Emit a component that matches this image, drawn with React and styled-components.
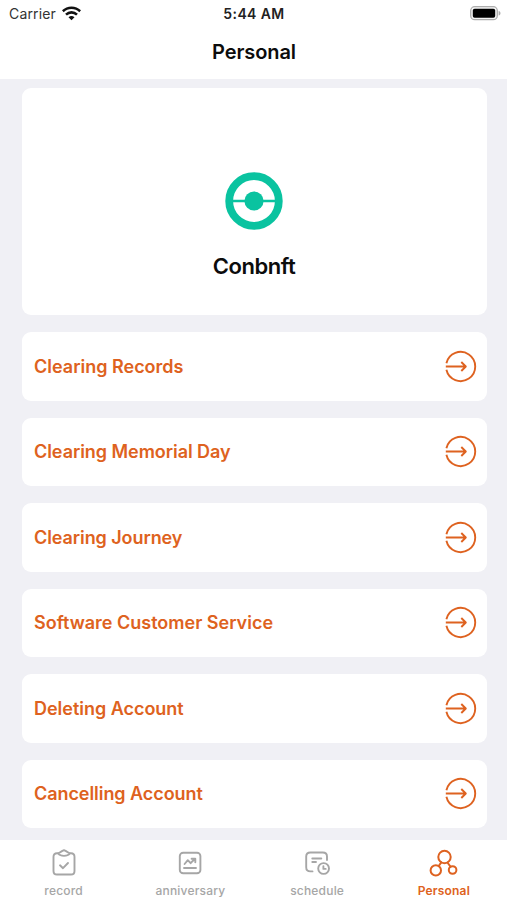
import React from "react";
import styled, { createGlobalStyle } from "styled-components";

const ORANGE = "#de6220";
const GREY = "#a6a6a6";

const GlobalStyle = createGlobalStyle`
  * { box-sizing: border-box; }
  body { margin: 0; background: #f0f0f5; }
`;

const Screen = styled.div`
  width: 507px;
  height: 900px;
  display: flex;
  flex-direction: column;
  overflow: hidden;
  background: #f0f0f5;
  font-family: Inter, "Liberation Sans", sans-serif;
  color: #0c0c0c;
`;

const Header = styled.header`
  height: 79px;
  flex: none;
  background: #fff;
`;

const StatusBar = styled.div`
  height: 27px;
  padding: 0 6px 0 9px;
  display: grid;
  grid-template-columns: 1fr auto 1fr;
  align-items: center;
`;

const Carrier = styled.div`
  display: flex;
  align-items: center;
  gap: 6px;
  font-size: 14px;
  letter-spacing: 0.15px;
  color: #333;
`;

const Clock = styled.div`
  margin-left: -2px;
  font-size: 14px;
  font-weight: 600;
  letter-spacing: 0.4px;
  color: #222;
`;

const BatterySlot = styled.div`
  display: flex;
  justify-content: flex-end;
`;

const Title = styled.h1`
  margin: 0;
  padding-left: 1px;
  height: 50px;
  line-height: 50px;
  text-align: center;
  font-size: 20px;
  font-weight: 600;
  letter-spacing: -0.1px;
`;

const Content = styled.main`
  flex: 1;
  min-height: 0;
  padding: 9px 20.5px 0 21.5px;
  display: flex;
  flex-direction: column;
  gap: 17px;
`;

const ProfileCard = styled.section`
  height: 227px;
  flex: none;
  padding-top: 84px;
  border-radius: 9px;
  background: #fff;
  display: flex;
  flex-direction: column;
  align-items: center;
`;

const ProfileName = styled.div`
  margin-top: 22px;
  line-height: 28px;
  font-size: 22px;
  font-weight: 600;
  letter-spacing: -0.45px;
`;

const Row = styled.button`
  height: 68.5px;
  flex: none;
  padding: 0 10px 0 12.5px;
  border: 0;
  border-radius: 9px;
  background: #fff;
  color: ${ORANGE};
  display: flex;
  align-items: center;
  justify-content: space-between;
  font: inherit;
  font-size: 18px;
  font-weight: 600;
`;

const RowLabel = styled.span`
  letter-spacing: ${(p) => p.$tracking || 0}px;
`;

const TabBar = styled.nav`
  height: 60.5px;
  flex: none;
  background: #fff;
  display: grid;
  grid-template-columns: repeat(4, 1fr);
`;

const Tab = styled.div`
  padding: 8.5px 0 0 0.5px;
  display: flex;
  flex-direction: column;
  align-items: center;
  color: ${(p) => (p.$active ? ORANGE : GREY)};
  font-size: 12px;
  font-weight: ${(p) => (p.$active ? 600 : 500)};
  letter-spacing: 0.2px;
  line-height: 16px;
  gap: 5px;
`;

const Wifi = () => (
  <svg width="19" height="15" viewBox="0 0 19 15" fill="none" stroke="#111" strokeWidth="2.6">
    <path d="M0.8 5.2C5.7.5 13.3.5 18.2 5.2" />
    <path d="M4 8.6C7.2 5.6 11.8 5.6 15 8.6" />
    <path d="M6.5 11.3Q9.5 8.8 12.5 11.3L9.5 14.3Z" fill="#111" stroke="none" />
  </svg>
);

const Battery = () => (
  <svg width="31" height="15" viewBox="0 0 31 15">
    <rect x="0.7" y="0.7" width="26.6" height="13" rx="4" fill="#f5f5f5" stroke="#adadad" strokeWidth="1.3" />
    <rect x="2.8" y="2.8" width="22.4" height="8.9" rx="1.8" fill="#000" />
    <path d="M28.6 5c2.5.5 2.5 4 0 4.5Z" fill="#adadad" />
  </svg>
);

const Logo = () => (
  <svg width="58" height="58" viewBox="0 0 58 58" fill="none" stroke="#0ac3a0">
    <circle cx="29" cy="29" r="24.8" strokeWidth="7.8" />
    <path d="M7 29H51" strokeWidth="2.4" />
    <circle cx="29" cy="29" r="9.6" fill="#0ac3a0" stroke="none" />
  </svg>
);

const EnterIcon = () => (
  <svg width="33" height="33" viewBox="0 0 33 33" fill="none" stroke="currentColor" strokeWidth="1.9" strokeLinejoin="round">
    <path d="M2.4 13.2A14.6 14.6 0 1 1 2.4 19.8" />
    <path d="M1.8 16.5H21.2M17.3 12L21.8 16.5L17.3 21" />
  </svg>
);

const tabIcon = { width: 30, height: 30, viewBox: "0 0 30 30", fill: "none", stroke: "currentColor", strokeWidth: 1.9, strokeLinecap: "round", strokeLinejoin: "round" };

const RecordIcon = () => (
  <svg {...tabIcon}>
    <path d="M9.3 5.2H8C5.6 5.2 4.5 6.5 4.5 8.8V22.9C4.5 25.2 5.6 26.5 8 26.5H22C24.4 26.5 25.5 25.2 25.5 22.9V8.8C25.5 6.5 24.4 5.2 22 5.2H20.7" />
    <path d="M9.2 5.5L13.4 2.9Q15 1.7 16.6 2.9L20.8 5.5Q19 7.9 15 7.9Q11 7.9 9.2 5.5Z" />
    <path d="M11 17.3L14 20.2L19 15" />
  </svg>
);

const AnniversaryIcon = () => (
  <svg {...tabIcon}>
    <rect x="4.8" y="4.7" width="20.6" height="20.6" rx="3.4" />
    <path d="M9.6 16L12.8 12.2L15.6 15.2L19.7 11M16.6 10.7H20.3V14.2M9 20H21" />
  </svg>
);

const ScheduleIcon = () => (
  <svg {...tabIcon}>
    <path d="M25 12V8.6C25 6 23.4 4.5 20.8 4.5H8.4C5.8 4.5 4.2 6 4.2 8.6V19.2C4.2 21.8 5.8 23.4 8.4 23.4H10.5" />
    <path d="M10.3 10.5H19.3M10.3 14H14" />
    <circle cx="21.6" cy="20.5" r="5.4" />
    <path d="M21.4 18.2V20.9H23.7" />
  </svg>
);

const PersonalIcon = () => (
  <svg {...tabIcon} strokeWidth="2">
    <circle cx="15.5" cy="9" r="6.2" />
    <circle cx="6.8" cy="22.4" r="5.2" />
    <circle cx="23.6" cy="22" r="3.8" />
    <path d="M12.3 14.4L9.7 18M18.4 14.5L21.5 18.6" />
  </svg>
);

const actions = [
  { label: "Clearing Records", tracking: 0 },
  { label: "Clearing Memorial Day", tracking: -0.05 },
  { label: "Clearing Journey", tracking: -0.08 },
  { label: "Software Customer Service", tracking: 0 },
  { label: "Deleting Account", tracking: -0.02 },
  { label: "Cancelling Account", tracking: -0.06 },
];

const tabs = [
  { label: "record", Icon: RecordIcon },
  { label: "anniversary", Icon: AnniversaryIcon },
  { label: "schedule", Icon: ScheduleIcon },
  { label: "Personal", Icon: PersonalIcon, active: true },
];

export default function App() {
  return (
    <>
      <GlobalStyle />
      <Screen>
        <Header>
          <StatusBar>
            <Carrier>Carrier <Wifi /></Carrier>
            <Clock>5:44 AM</Clock>
            <BatterySlot><Battery /></BatterySlot>
          </StatusBar>
          <Title>Personal</Title>
        </Header>
        <Content>
          <ProfileCard>
            <Logo />
            <ProfileName>Conbnft</ProfileName>
          </ProfileCard>
          {actions.map(({ label, tracking }) => (
            <Row key={label}>
              <RowLabel $tracking={tracking}>{label}</RowLabel>
              <EnterIcon />
            </Row>
          ))}
        </Content>
        <TabBar>
          {tabs.map(({ label, Icon, active }) => (
            <Tab key={label} $active={active}>
              <Icon />
              {label}
            </Tab>
          ))}
        </TabBar>
      </Screen>
    </>
  );
}
